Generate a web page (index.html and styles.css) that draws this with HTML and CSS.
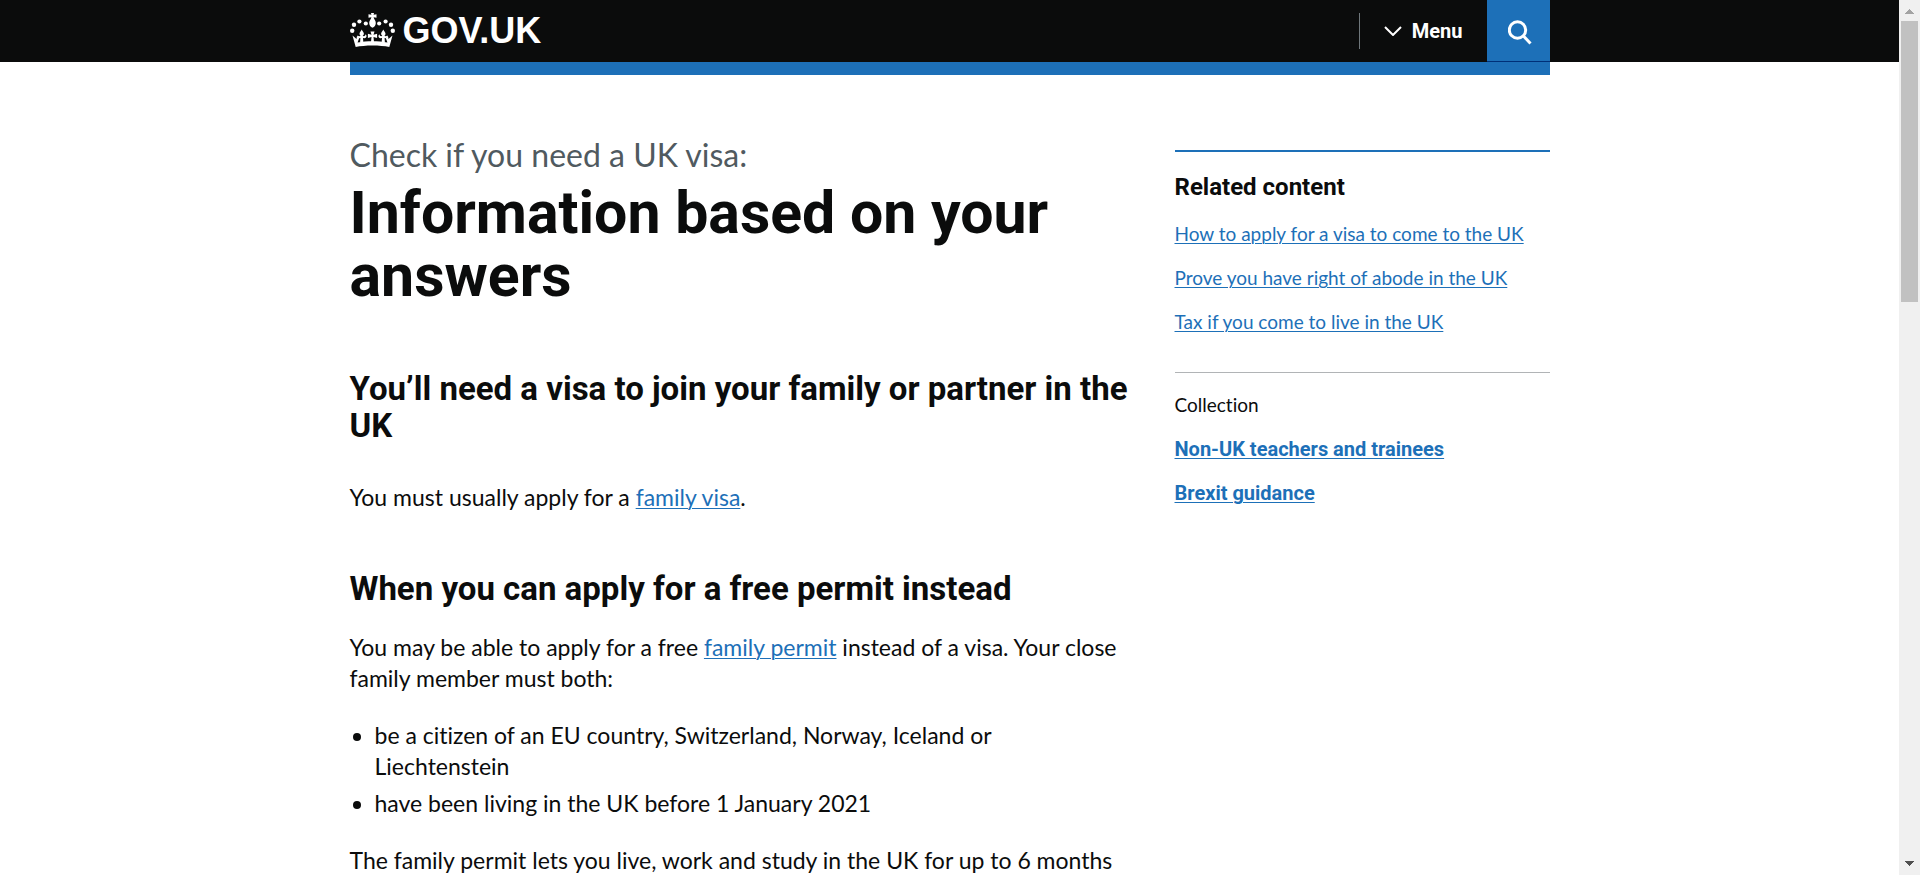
FILE: index.html
```html
<!DOCTYPE html>
<html lang="en">
<head>
<meta charset="utf-8">
<title>Information based on your answers - Check if you need a UK visa - GOV.UK</title>
<link rel="stylesheet" href="styles.css">
</head>
<body>
<div class="viewport">
  <div class="page">
    <header class="header">
      <div class="container header-inner">
        <a class="logo" href="#">
          <svg class="crown" viewBox="0 0 45 34" fill="currentColor" aria-hidden="true">
            <path d="M21 0h3l-.4 1.700 2.900-.5v3.600l-2.900-.5c.4 2 2.200 3.200 2.200 5.700 0 2.300-1.300 4-3.300 4.800-2-.8-3.300-2.500-3.300-4.800 0-2.500 1.800-3.700 2.200-5.700l-2.900.5V1.200l2.900.5z"/>
            <circle cx="15.800" cy="10.500" r="2.100"/><circle cx="29.200" cy="10.500" r="2.100"/>
            <circle cx="9.400" cy="8.500" r="2.100"/><circle cx="35.600" cy="8.500" r="2.100"/>
            <circle cx="4" cy="11.800" r="2.200"/><circle cx="41" cy="11.800" r="2.200"/>
            <circle cx="2.200" cy="17.700" r="2.200"/><circle cx="42.800" cy="17.700" r="2.200"/>
            <path d="M2.500 22.500l4 3.500.6-3.500 2 2.700-1.500 4.300c9-1.700 20.800-1.700 29.800 0l-1.500-4.300 2-2.700.6 3.500 4-3.500L39.300 34c-9-2-24.600-2-33.600 0z"/>
            <path d="M11.700 16.500c.8 1.900 2.200 2.900 2.200 4.300 0 .9-.6 1.500-1.200 2 1.500.9 3-.2 2.700-1.600 1.700.8 1.500 3.700-.7 4l-1.700-.1.300 4-3.200.3.300-4.300c-2 .3-3.200-.8-2.700-2.600 1 .9 2 .8 2.900.3-.7-.5-1.100-1.100-1.100-2 0-1.400 1.400-2.400 2.200-4.300z"/>
            <path d="M33.300 16.500c-.8 1.900-2.200 2.900-2.200 4.300 0 .9.600 1.500 1.200 2-1.500.9-3-.2-2.700-1.600-1.700.8-1.500 3.700.7 4l1.700-.1-.3 4 3.200.3-.3-4.300c2 .3 3.200-.8 2.700-2.600-1 .9-2 .8-2.900.3.700-.5 1.100-1.100 1.100-2 0-1.400-1.400-2.400-2.200-4.300z"/>
            <path d="M20.500 18.500h4l-1 3.300 3.600-1v4.300l-3.600-1 .5 4.900h-3l.5-4.900-3.600 1v-4.300l3.600 1z"/>
          </svg>
          <span class="logo-text">GOV.UK</span>
        </a>
        <div class="header-nav">
          <button class="menu-button" type="button">
            <svg class="chevron" viewBox="0 0 18 10" fill="none" stroke="currentColor" stroke-width="2" aria-hidden="true"><path d="M1 1l8 8 8-8"/></svg>
            Menu
          </button>
          <button class="search-button" type="button" aria-label="Search GOV.UK">
            <svg class="search-icon" viewBox="0 0 24 25" fill="none" stroke="currentColor" stroke-width="3" aria-hidden="true"><circle cx="9.500" cy="10" r="8.200"/><path d="M15.500 16l7 7.500"/></svg>
          </button>
        </div>
      </div>
    </header>
    <div class="container"><div class="blue-bar"></div></div>
    <div class="container columns">
      <main class="main">
        <p class="caption">Check if you need a UK visa:</p>
        <h1 class="title">Information based on your answers</h1>
        <h2 class="heading outcome">You’ll need a visa to join your family or partner in the UK</h2>
        <p class="body-text">You must usually apply for a <a href="#">family visa</a>.</p>
        <h2 class="heading section">When you can apply for a free permit instead</h2>
        <p class="body-text">You may be able to apply for a free <a href="#">family permit</a> instead of a visa. Your close family member must both:</p>
        <ul class="list">
          <li>be a citizen of an EU country, Switzerland, Norway, Iceland or Liechtenstein</li>
          <li>have been living in the UK before 1 January 2021</li>
        </ul>
        <p class="body-text">The family permit lets you live, work and study in the UK for up to 6 months</p>
      </main>
      <aside class="sidebar">
        <h2 class="related-title">Related content</h2>
        <ul class="links">
          <li><a href="#">How to apply for a visa to come to the UK</a></li>
          <li><a href="#">Prove you have right of abode in the UK</a></li>
          <li><a href="#">Tax if you come to live in the UK</a></li>
        </ul>
        <div class="collection">
          <h3 class="collection-title">Collection</h3>
          <ul class="links links-bold">
            <li><a href="#">Non-UK teachers and trainees</a></li>
            <li><a href="#">Brexit guidance</a></li>
          </ul>
        </div>
      </aside>
    </div>
  </div>
  <div class="scrollbar" aria-hidden="true">
    <svg class="arrow arrow-up" viewBox="0 0 9 5" shape-rendering="crispEdges"><path d="M4 0h1v1h1v1h1v1h1v1h1v1H0V4h1V3h1V2h1V1h1z"/></svg>
    <div class="track"><div class="thumb"></div></div>
    <svg class="arrow" viewBox="0 0 9 5" shape-rendering="crispEdges"><path d="M0 0h9v1H8v1H7v1H6v1H5v1H4V4H3V3H2V2H1V1H0z"/></svg>
  </div>
</div>
</body>
</html>
```
FILE: styles.css
```css
* { box-sizing: border-box; }

body {
  margin: 0;
  background: #fff;
  color: #0b0c0c;
  font-family: Lato, "Liberation Sans", sans-serif;
  font-variant-ligatures: none;
}

h1, h2, h3, p, ul { margin: 0; padding: 0; }

button {
  border: 0;
  padding: 0;
  background: none;
  color: inherit;
  font: inherit;
  cursor: pointer;
}

a {
  color: #1d70b8;
  text-decoration-thickness: 1px;
  text-underline-offset: 2px;
}

.viewport { display: flex; height: 100vh; overflow: hidden; }
.page { flex: 1; min-width: 0; overflow: hidden; }
.container { max-width: 1200px; margin: 0 auto; }

/* Header */
.header { background: #0b0c0c; color: #fff; }
.header-inner { display: flex; justify-content: space-between; height: 62px; }
.logo { display: flex; align-items: center; gap: 8px; color: #fff; text-decoration: none; }
.crown { width: 45px; height: 34px; margin-bottom: 2px; }
.logo-text { font: 700 36px/40px "Liberation Sans", Arial, sans-serif; }
.header-nav { display: flex; align-items: center; }
.menu-button {
  display: flex;
  align-items: center;
  gap: 10px;
  height: 36px;
  padding: 0 24px;
  border-left: 1px solid #6f777b;
  font-family: Roboto, "Liberation Sans", sans-serif;
  font-size: 20px;
  font-weight: 700;
  line-height: 24px;
}
.chevron { width: 18px; height: 10px; }
.search-button {
  display: flex;
  align-items: center;
  justify-content: center;
  width: 63px;
  height: 62px;
  padding: 3px 0 0 3px;
  border-bottom: 1px solid #003078;
  background: #1d70b8;
}
.search-icon { width: 24px; height: 25px; }
.blue-bar { height: 13px; background: #1d70b8; }

/* Content */
.columns { display: grid; grid-template-columns: 787px minmax(0, 375px); justify-content: space-between; }
.main { padding-top: 61px; }
.caption { margin-bottom: 7px; color: #505a5f; font-size: 32px; line-height: 38px; }
.title, .heading, .related-title, .links-bold { font-family: Roboto, "Liberation Sans", sans-serif; }
.title { font-size: 59px; line-height: 63px; }
.heading { font-size: 33px; line-height: 37px; }
.outcome { margin: 63px 0 38px; }
.section { margin: 57px 0 25px; }
.body-text, .list { font-size: 23px; line-height: 31px; }
.list { margin: 26px 0; padding: 0 25px; }
.list li + li { margin-top: 6px; }

/* Sidebar */
.sidebar { align-self: start; margin-top: 75px; padding-top: 20px; border-top: 2px solid #1d70b8; }
.related-title { margin-bottom: 20px; font-size: 24px; line-height: 30px; }
.links { display: grid; gap: 20px; list-style: none; font-size: 19px; line-height: 24px; }
.links-bold { font-size: 20px; font-weight: 700; }
.collection { display: grid; gap: 20px; margin-top: 38px; padding-top: 20px; border-top: 1px solid #b1b4b6; }
.collection-title { font-size: 19px; font-weight: 400; line-height: 24px; }

/* Scrollbar */
.scrollbar {
  display: flex;
  flex-direction: column;
  align-items: center;
  width: 21px;
  padding: 9px 1px;
  background: #f0f0f0;
}
.arrow { width: 9px; height: 5px; fill: #505050; }
.arrow-up { fill: #a3a3a3; }
.track { flex: 1; width: 17px; padding: 7px 0; }
.thumb { height: 281px; background: #c1c1c1; }
```
